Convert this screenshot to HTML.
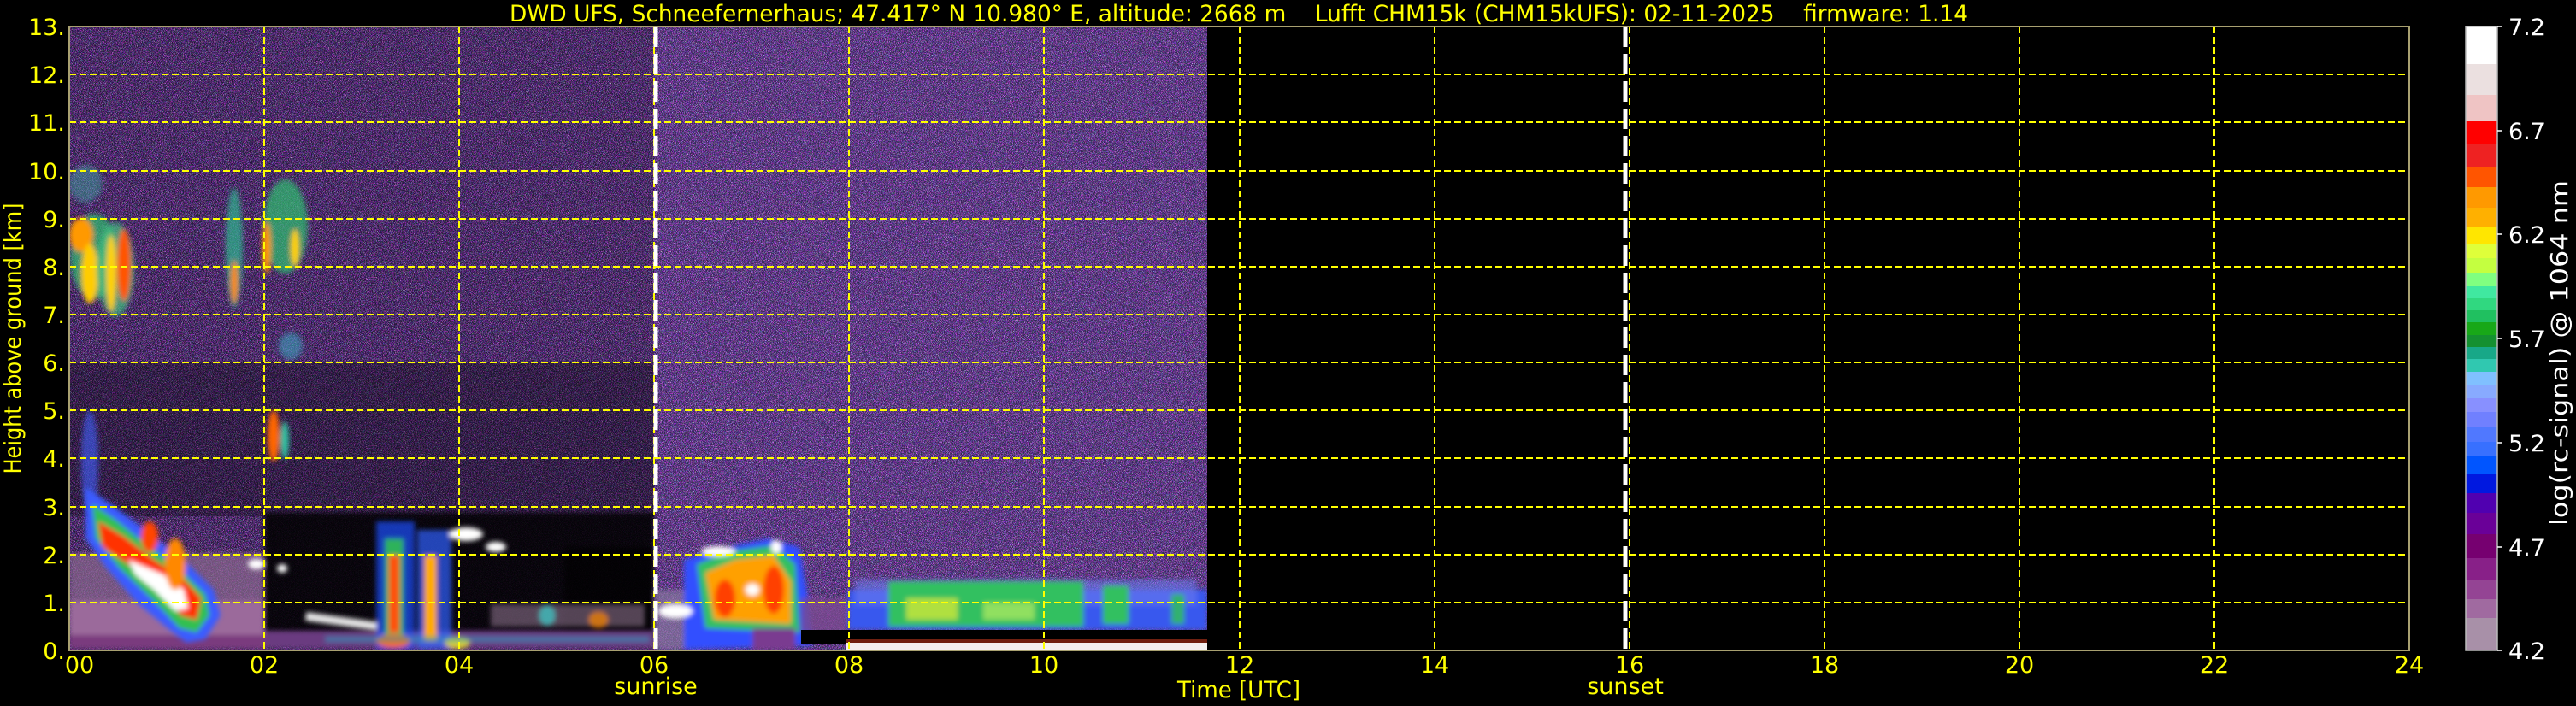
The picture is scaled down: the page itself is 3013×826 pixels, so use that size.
<!DOCTYPE html>
<html><head><meta charset="utf-8"><style>
html,body{margin:0;padding:0;background:#000;}
svg{display:block;}
text{font-family:"DejaVu Sans","Liberation Sans",sans-serif;}
</style></head><body>
<svg width="3013" height="826" viewBox="0 0 3013 826" xmlns="http://www.w3.org/2000/svg">
<defs>
<filter id="nz" x="0" y="0" width="100%" height="100%" color-interpolation-filters="sRGB">
<feTurbulence type="fractalNoise" baseFrequency="1.3" numOctaves="1" seed="7"/>
<feComponentTransfer>
<feFuncR type="linear" slope="6" intercept="-2.4"/>
<feFuncG type="linear" slope="6" intercept="-2.7"/>
<feFuncB type="linear" slope="6" intercept="-2.2"/>
<feFuncA type="linear" slope="6" intercept="-2.6"/>
</feComponentTransfer>
<feColorMatrix type="matrix" values="0.6 0 0.35 0 0.05  0.1 0.6 0.1 0 0  0.3 0.15 0.8 0 0.1  0 0 0 1 0"/>
</filter>
<filter id="bl" x="-20%" y="-20%" width="140%" height="140%"><feGaussianBlur stdDeviation="3"/></filter>
<filter id="bl2" x="-20%" y="-20%" width="140%" height="140%"><feGaussianBlur stdDeviation="6"/></filter>
<clipPath id="pc"><rect x="81" y="31" width="1331" height="730"/></clipPath>
</defs>

<g clip-path="url(#pc)">
<rect x="81" y="31" width="1331" height="730" fill="#2a2048"/>
<rect x="81" y="31" width="1331" height="730" filter="url(#nz)"/>
<rect x="81" y="31" width="684" height="730" fill="#000" opacity="0.18"/>
<rect x="81" y="424" width="684" height="180" fill="#000" opacity="0.3"/>
<rect x="765" y="31" width="647" height="730" fill="#6a5aa0" opacity="0.12"/>
<g filter="url(#bl)">
<rect x="309" y="600" width="456" height="145" fill="#000" opacity="0.88"/>
<rect x="660" y="640" width="105" height="110" fill="#000" opacity="0.6"/>
</g>

<g filter="url(#bl)">
<ellipse cx="110" cy="300" rx="28" ry="50" fill="#30c070" opacity="0.7"/>
<ellipse cx="95" cy="275" rx="14" ry="20" fill="#ff9900"/>
<ellipse cx="105" cy="320" rx="10" ry="35" fill="#ffcc00"/>
<ellipse cx="135" cy="315" rx="22" ry="55" fill="#40c080" opacity="0.7"/>
<ellipse cx="145" cy="310" rx="8" ry="42" fill="#ff5500"/>
<ellipse cx="130" cy="320" rx="6" ry="45" fill="#ffd000"/>
<ellipse cx="100" cy="215" rx="20" ry="22" fill="#40a0a0" opacity="0.5"/>
<ellipse cx="274" cy="290" rx="10" ry="70" fill="#30b890" opacity="0.7"/>
<ellipse cx="274" cy="330" rx="4" ry="25" fill="#ff8800"/>
<ellipse cx="334" cy="265" rx="26" ry="55" fill="#30c070" opacity="0.7"/>
<ellipse cx="312" cy="290" rx="5" ry="30" fill="#ff9900"/>
<ellipse cx="345" cy="290" rx="5" ry="22" fill="#ffd000"/>
<ellipse cx="340" cy="405" rx="14" ry="16" fill="#40a0c0" opacity="0.6"/>
<ellipse cx="320" cy="510" rx="7" ry="30" fill="#ff6600"/>
<ellipse cx="333" cy="515" rx="5" ry="22" fill="#30c0a0"/>
<ellipse cx="105" cy="540" rx="10" ry="60" fill="#4060ff" opacity="0.6"/>
</g>

<g filter="url(#bl)">
<rect x="81" y="647" width="228" height="60" fill="#8a6a8e" opacity="0.7"/>
<rect x="81" y="703" width="228" height="42" fill="#9b6a9b"/>
<rect x="81" y="743" width="228" height="16" fill="#7a3a7e"/>
<rect x="309" y="738" width="456" height="20" fill="#6a3a80"/>
</g>

<g filter="url(#bl)">
<polygon points="100,570 130,590 170,620 215,655 250,690 258,720 240,748 218,752 196,735 160,705 125,665 100,630" fill="#3a5cff"/>
<polygon points="108,590 135,608 172,638 212,668 240,695 245,720 230,740 210,735 182,705 140,665 112,630" fill="#30c050"/>
<polygon points="115,610 145,628 180,655 215,678 235,700 230,725 212,720 185,690 150,660 120,640" fill="#ff3000"/>
<polygon points="150,655 190,672 215,690 220,712 205,715 180,690 158,672" fill="#ffffff"/>
<ellipse cx="205" cy="660" rx="12" ry="30" fill="#ff8800"/>
<ellipse cx="175" cy="628" rx="10" ry="18" fill="#ff4400"/>
</g>

<g filter="url(#bl)">
<ellipse cx="300" cy="660" rx="10" ry="6" fill="#fff"/>
<ellipse cx="330" cy="665" rx="6" ry="5" fill="#fff"/>
<rect x="357" y="722" width="85" height="10" fill="#ffffff" opacity="0.9" transform="rotate(8 400 728)"/>
<rect x="440" y="610" width="45" height="150" fill="#2050ff" opacity="0.7"/>
<rect x="450" y="630" width="22" height="125" fill="#30c050" opacity="0.9"/>
<rect x="455" y="650" width="12" height="90" fill="#ff5000"/>
<rect x="488" y="620" width="40" height="140" fill="#3060ff" opacity="0.7"/>
<rect x="496" y="650" width="15" height="100" fill="#ffaa00"/>
<ellipse cx="460" cy="750" rx="20" ry="8" fill="#ff6600"/>
<ellipse cx="535" cy="752" rx="15" ry="7" fill="#ddd020"/>
<rect x="380" y="744" width="380" height="8" fill="#30a0c0" opacity="0.5"/>
<rect x="574" y="707" width="180" height="26" fill="#8a708a" opacity="0.6"/>
<ellipse cx="545" cy="625" rx="20" ry="8" fill="#fff"/>
<ellipse cx="580" cy="640" rx="12" ry="6" fill="#fff"/>
<ellipse cx="640" cy="720" rx="10" ry="12" fill="#40c0c0" opacity="0.8"/>
<ellipse cx="700" cy="725" rx="12" ry="10" fill="#ff8800" opacity="0.7"/>
</g>

<g filter="url(#bl)">
<rect x="765" y="690" width="40" height="70" fill="#8878a0" opacity="0.7"/>
<polygon points="800,655 850,640 900,630 935,640 945,700 950,755 800,760" fill="#3050ff"/>
<polygon points="815,660 855,645 905,638 930,660 935,740 825,735" fill="#30c060"/>
<polygon points="825,670 860,655 905,650 925,680 925,730 835,725" fill="#ffa000"/>
<ellipse cx="848" cy="700" rx="12" ry="22" fill="#ff4000"/>
<ellipse cx="905" cy="690" rx="12" ry="28" fill="#ff4000"/>
<ellipse cx="840" cy="645" rx="20" ry="6" fill="#ffffff"/>
<ellipse cx="880" cy="690" rx="8" ry="7" fill="#ffffff"/>
<ellipse cx="908" cy="640" rx="6" ry="8" fill="#ffffff"/>
<ellipse cx="790" cy="715" rx="20" ry="8" fill="#ffffff"/>
<rect x="880" y="735" width="50" height="25" fill="#7a3a90"/>
<rect x="937" y="700" width="55" height="40" fill="#7a4a90" opacity="0.8"/>
</g>

<g filter="url(#bl)">
<rect x="992" y="690" width="420" height="47" fill="#3858ee"/>
<rect x="1000" y="678" width="400" height="30" fill="#6a7aee" opacity="0.6"/>
<rect x="1039" y="680" width="228" height="53" fill="#30c060"/>
<rect x="1060" y="700" width="60" height="25" fill="#b0e040"/>
<rect x="1150" y="705" width="60" height="20" fill="#90e060"/>
<rect x="1290" y="685" width="30" height="45" fill="#30c060"/>
<rect x="1370" y="695" width="15" height="35" fill="#30b070"/>
</g>
<rect x="937" y="737" width="475" height="16" fill="#000"/>
<rect x="990" y="752" width="422" height="9" fill="#f4f0f0"/>
<rect x="990" y="748" width="422" height="4" fill="#e04020" opacity="0.5"/>
</g>

<g stroke="#ffff00" stroke-width="2" stroke-dasharray="8,4" fill="none">
<line x1="81" y1="705" x2="2818" y2="705"/>
<line x1="81" y1="649" x2="2818" y2="649"/>
<line x1="81" y1="593" x2="2818" y2="593"/>
<line x1="81" y1="536" x2="2818" y2="536"/>
<line x1="81" y1="480" x2="2818" y2="480"/>
<line x1="81" y1="424" x2="2818" y2="424"/>
<line x1="81" y1="368" x2="2818" y2="368"/>
<line x1="81" y1="312" x2="2818" y2="312"/>
<line x1="81" y1="256" x2="2818" y2="256"/>
<line x1="81" y1="200" x2="2818" y2="200"/>
<line x1="81" y1="143" x2="2818" y2="143"/>
<line x1="81" y1="87" x2="2818" y2="87"/>
<line x1="309" y1="31" x2="309" y2="761"/>
<line x1="537" y1="31" x2="537" y2="761"/>
<line x1="765" y1="31" x2="765" y2="761"/>
<line x1="993" y1="31" x2="993" y2="761"/>
<line x1="1221" y1="31" x2="1221" y2="761"/>
<line x1="1450" y1="31" x2="1450" y2="761"/>
<line x1="1678" y1="31" x2="1678" y2="761"/>
<line x1="1906" y1="31" x2="1906" y2="761"/>
<line x1="2134" y1="31" x2="2134" y2="761"/>
<line x1="2362" y1="31" x2="2362" y2="761"/>
<line x1="2590" y1="31" x2="2590" y2="761"/>
</g>
<line x1="767" y1="31" x2="767" y2="761" stroke="#fff" stroke-width="5" stroke-dasharray="24,8"/>
<line x1="1901" y1="31" x2="1901" y2="761" stroke="#fff" stroke-width="5" stroke-dasharray="24,8"/>
<rect x="81" y="31" width="2737" height="730" fill="none" stroke="#a8a070" stroke-width="2"/>

<text x="1449" y="25" fill="#ffff00" font-size="27" text-anchor="middle" textLength="1706" lengthAdjust="spacingAndGlyphs" xml:space="preserve">DWD UFS, Schneefernerhaus; 47.417° N 10.980° E, altitude: 2668 m    Lufft CHM15k (CHM15kUFS): 02-11-2025    firmware: 1.14</text>

<g fill="#ffff00" font-size="27" text-anchor="end">
<text x="76" y="771">0.</text>
<text x="76" y="715">1.</text>
<text x="76" y="659">2.</text>
<text x="76" y="603">3.</text>
<text x="76" y="546">4.</text>
<text x="76" y="490">5.</text>
<text x="76" y="434">6.</text>
<text x="76" y="378">7.</text>
<text x="76" y="322">8.</text>
<text x="76" y="266">9.</text>
<text x="76" y="210">10.</text>
<text x="76" y="153">11.</text>
<text x="76" y="97">12.</text>
<text x="76" y="41">13.</text>
</g>
<text transform="translate(24 396) rotate(-90)" fill="#ffff00" font-size="27" text-anchor="middle" textLength="317" lengthAdjust="spacingAndGlyphs">Height above ground [km]</text>

<g fill="#ffff00" font-size="27" text-anchor="middle">
<text x="93" y="787">00</text>
<text x="309" y="787">02</text>
<text x="537" y="787">04</text>
<text x="765" y="787">06</text>
<text x="993" y="787">08</text>
<text x="1221" y="787">10</text>
<text x="1450" y="787">12</text>
<text x="1678" y="787">14</text>
<text x="1906" y="787">16</text>
<text x="2134" y="787">18</text>
<text x="2362" y="787">20</text>
<text x="2590" y="787">22</text>
<text x="2818" y="787">24</text>
<text x="767" y="812">sunrise</text>
<text x="1901" y="812">sunset</text>
<text x="1449" y="816" textLength="144" lengthAdjust="spacingAndGlyphs">Time [UTC]</text>
</g>

<g>
<rect x="2884" y="31" width="37" height="44" fill="#ffffff"/>
<rect x="2884" y="75" width="37" height="36" fill="#ebe0e0"/>
<rect x="2884" y="111" width="37" height="30" fill="#efc4c4"/>
<rect x="2884" y="141" width="37" height="28" fill="#ff0000"/>
<rect x="2884" y="169" width="37" height="26" fill="#ee2222"/>
<rect x="2884" y="195" width="37" height="24" fill="#ff5500"/>
<rect x="2884" y="219" width="37" height="24" fill="#ff9900"/>
<rect x="2884" y="243" width="37" height="22" fill="#ffb000"/>
<rect x="2884" y="265" width="37" height="20" fill="#ffe600"/>
<rect x="2884" y="285" width="37" height="17" fill="#dfff3a"/>
<rect x="2884" y="302" width="37" height="17" fill="#c4ff40"/>
<rect x="2884" y="319" width="37" height="16" fill="#80ff80"/>
<rect x="2884" y="335" width="37" height="14" fill="#40e8a0"/>
<rect x="2884" y="349" width="37" height="14" fill="#30d880"/>
<rect x="2884" y="363" width="37" height="14" fill="#20c060"/>
<rect x="2884" y="377" width="37" height="15" fill="#18a818"/>
<rect x="2884" y="392" width="37" height="14" fill="#149030"/>
<rect x="2884" y="406" width="37" height="14" fill="#18a888"/>
<rect x="2884" y="420" width="37" height="15" fill="#30c8b0"/>
<rect x="2884" y="435" width="37" height="15" fill="#80c0ff"/>
<rect x="2884" y="450" width="37" height="16" fill="#88aaff"/>
<rect x="2884" y="466" width="37" height="16" fill="#8890ff"/>
<rect x="2884" y="482" width="37" height="17" fill="#7080ff"/>
<rect x="2884" y="499" width="37" height="18" fill="#5078ff"/>
<rect x="2884" y="517" width="37" height="17" fill="#3870ff"/>
<rect x="2884" y="534" width="37" height="20" fill="#0055ff"/>
<rect x="2884" y="554" width="37" height="23" fill="#0018e0"/>
<rect x="2884" y="577" width="37" height="23" fill="#5000b0"/>
<rect x="2884" y="600" width="37" height="25" fill="#6a0098"/>
<rect x="2884" y="625" width="37" height="28" fill="#760070"/>
<rect x="2884" y="653" width="37" height="26" fill="#882088"/>
<rect x="2884" y="679" width="37" height="22" fill="#944494"/>
<rect x="2884" y="701" width="37" height="22" fill="#a06aa0"/>
<rect x="2884" y="723" width="37" height="38" fill="#a890a8"/>
<rect x="2884" y="31" width="37" height="730" fill="none" stroke="#bbbbbb" stroke-width="1.5"/>
</g>
<g fill="#ffffff" font-size="27">
<g stroke="#ffffff" stroke-width="1.5">
<line x1="2921" y1="31" x2="2926" y2="31"/>
<line x1="2921" y1="153" x2="2926" y2="153"/>
<line x1="2921" y1="274" x2="2926" y2="274"/>
<line x1="2921" y1="396" x2="2926" y2="396"/>
<line x1="2921" y1="518" x2="2926" y2="518"/>
<line x1="2921" y1="640" x2="2926" y2="640"/>
<line x1="2921" y1="761" x2="2926" y2="761"/>
</g>
<text x="2934" y="41">7.2</text>
<text x="2934" y="163">6.7</text>
<text x="2934" y="284">6.2</text>
<text x="2934" y="406">5.7</text>
<text x="2934" y="528">5.2</text>
<text x="2934" y="650">4.7</text>
<text x="2934" y="771">4.2</text>
</g>
<text transform="translate(3003 413) rotate(-90)" fill="#ffffff" font-size="28" text-anchor="middle" textLength="404" lengthAdjust="spacingAndGlyphs">log(rc-signal) @ 1064 nm</text>
</svg>
</body></html>
